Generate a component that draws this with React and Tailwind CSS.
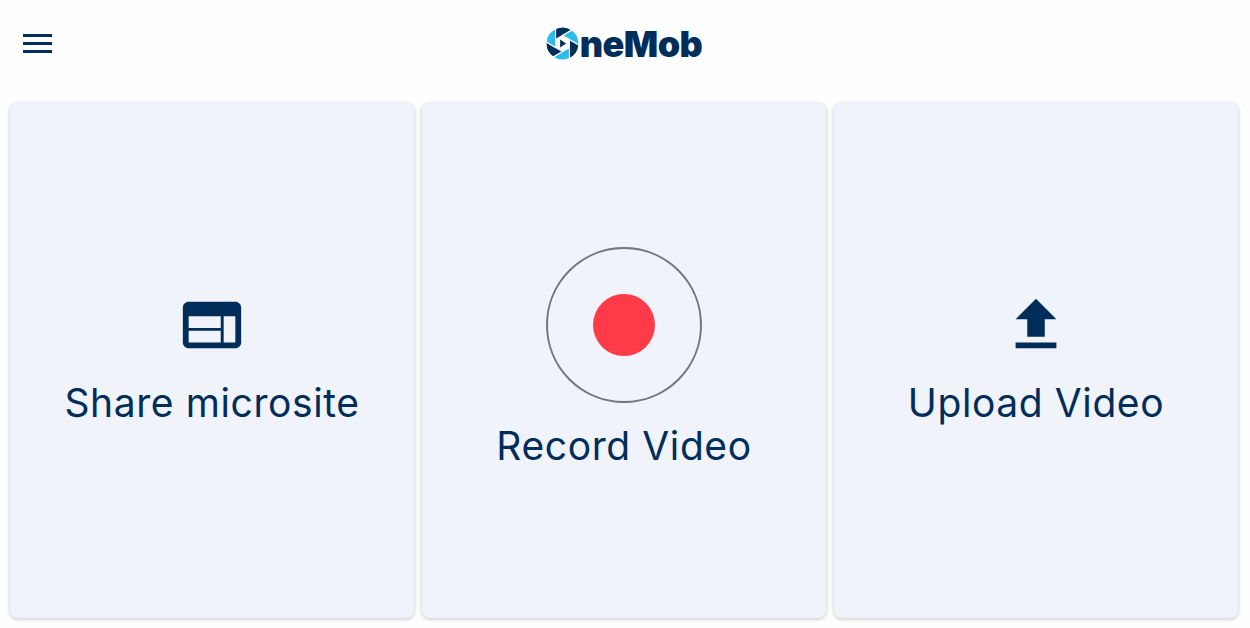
import { MdWeb, MdFileUpload } from "react-icons/md";

const font = { fontFamily: "Inter, sans-serif" };

const blades = [
  { angle: 0, fill: "#012d5a" },
  { angle: 60, fill: "#2fbbe9" },
  { angle: 120, fill: "#012d5a" },
  { angle: 180, fill: "#2fbbe9" },
  { angle: 240, fill: "#012d5a" },
  { angle: 300, fill: "#2fbbe9" },
];

const Logo = () => (
  <div className="flex flex-row items-center gap-[1px] pr-[2px]">
    <svg width="33" height="33" viewBox="-16.5 -16.5 33 33" className="shrink-0">
      {blades.map((b) => (
        <path
          key={b.angle}
          d="M6.93 -4L16.43 1.49A16.5 16.5 0 0 1 6.93 14.97L6.93 4Z"
          fill={b.fill}
          stroke="#ffffff"
          strokeWidth="1.1"
          transform={`rotate(${b.angle})`}
        />
      ))}
      <path d="M-2.4 -4 3.6 0 -2.4 4Z" fill="#012d5a" />
    </svg>
    <span className="text-[36px] leading-none font-black tracking-[-0.6px] text-[#012d5a]">neMob</span>
  </div>
);

const Card = ({ children }) => (
  <div className="flex-1 flex flex-col items-center justify-center pb-[4px] bg-[#f0f3fa] rounded-[8px] shadow-[0_1px_4px_rgba(0,0,0,0.24)]">
    {children}
  </div>
);

const App = () => {
  return (
    <div style={font} className="flex flex-col w-[1250px] h-[628px] bg-[#fefefe] overflow-hidden">
      <div className="relative flex flex-row items-center justify-center h-[103px] shrink-0 pb-[16px]">
        <button className="absolute left-[23px] top-[34px] flex flex-col gap-[5px] w-[29px]">
          <span className="block h-[3px] w-full bg-[#012d5a]" />
          <span className="block h-[3px] w-full bg-[#012d5a]" />
          <span className="block h-[3px] w-full bg-[#012d5a]" />
        </button>
        <Logo />
      </div>
      <div className="flex flex-row gap-[8px] h-[515px] pl-[10px] pr-[12px]">
        <Card>
          <MdWeb className="text-[70px] text-[#012d5a]" />
          <p className="mt-[19px] text-[39px] leading-[48px] tracking-[0.6px] text-[#012d5a]">Share microsite</p>
        </Card>
        <Card>
          <div className="flex items-center justify-center w-[156px] h-[156px] rounded-full border-2 border-[#74777f]">
            <div className="w-[62px] h-[62px] rounded-full bg-[#ff3b4a]" />
          </div>
          <p className="mt-[19px] text-[39px] leading-[48px] tracking-[0.6px] text-[#012d5a]">Record Video</p>
        </Card>
        <Card>
          <MdFileUpload className="text-[70px] text-[#012d5a]" />
          <p className="mt-[19px] text-[39px] leading-[48px] tracking-[0.6px] text-[#012d5a]">Upload Video</p>
        </Card>
      </div>
    </div>
  );
};

export default App;
